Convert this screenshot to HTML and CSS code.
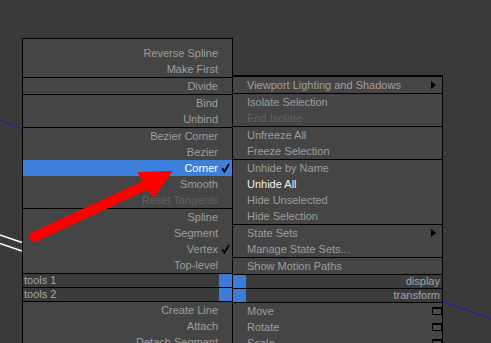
FILE: index.html
```html
<!DOCTYPE html>
<html lang="en">
<head>
    <meta charset="UTF-8">
    <meta name="viewport" content="width=device-width, initial-scale=1.0">
    <title>Quad Menu</title>
    <link rel="stylesheet" href="styles.css">
</head>
<body>
    <div class="viewport">
        <!-- scene lines behind the menu -->
        <svg class="scene" width="491" height="343">
            <line x1="0" y1="120" x2="22" y2="129" stroke="#1c1cb4" stroke-width="1"/>
            <line x1="442" y1="301" x2="491" y2="319" stroke="#1c1cb4" stroke-width="1"/>
            <line x1="0" y1="235" x2="22" y2="242.5" stroke="#ffffff" stroke-width="1.4"/>
            <line x1="0" y1="243.5" x2="22" y2="251" stroke="#ffffff" stroke-width="1.4"/>
        </svg>

        <div class="quad">
            <div class="col col-left">
                <div class="group first">
                    <div class="item"><span class="label">Reverse Spline</span><span class="mark"></span></div>
                    <div class="item"><span class="label">Make First</span><span class="mark"></span></div>
                </div>
                <div class="group">
                    <div class="item"><span class="label">Divide</span><span class="mark"></span></div>
                </div>
                <div class="group">
                    <div class="item"><span class="label">Bind</span><span class="mark"></span></div>
                    <div class="item"><span class="label">Unbind</span><span class="mark"></span></div>
                </div>
                <div class="group">
                    <div class="item"><span class="label">Bezier Corner</span><span class="mark"></span></div>
                    <div class="item"><span class="label">Bezier</span><span class="mark"></span></div>
                    <div class="item active"><span class="label">Corner</span><span class="mark">
                        <svg width="9" height="10" viewBox="0 0 9 10"><path d="M1.2 5.2 L3.4 8.6 L8 1" fill="none" stroke="#000" stroke-width="1.7"/></svg>
                    </span></div>
                    <div class="item"><span class="label">Smooth</span><span class="mark"></span></div>
                    <div class="item disabled"><span class="label">Reset Tangents</span><span class="mark"></span></div>
                </div>
                <div class="group">
                    <div class="item"><span class="label">Spline</span><span class="mark"></span></div>
                    <div class="item"><span class="label">Segment</span><span class="mark"></span></div>
                    <div class="item"><span class="label">Vertex</span><span class="mark">
                        <svg width="9" height="10" viewBox="0 0 9 10"><path d="M1.2 5.2 L3.4 8.6 L8 1" fill="none" stroke="#000" stroke-width="1.7"/></svg>
                    </span></div>
                    <div class="item"><span class="label">Top-level</span><span class="mark"></span></div>
                </div>
                <div class="bar"><span class="bar-text">tools 1</span><span class="swatch"></span></div>
                <div class="bar"><span class="bar-text">tools 2</span><span class="swatch"></span></div>
                <div class="group">
                    <div class="item"><span class="label">Create Line</span><span class="mark"></span></div>
                    <div class="item"><span class="label">Attach</span><span class="mark"></span></div>
                    <div class="item"><span class="label">Detach Segment</span><span class="mark"></span></div>
                </div>
            </div>

            <div class="col col-right">
                <div class="group">
                    <div class="item"><span class="mark"></span><span class="label">Viewport Lighting and Shadows</span><span class="sub"></span></div>
                </div>
                <div class="group">
                    <div class="item"><span class="mark"></span><span class="label">Isolate Selection</span></div>
                    <div class="item disabled"><span class="mark"></span><span class="label">End Isolate</span></div>
                </div>
                <div class="group">
                    <div class="item"><span class="mark"></span><span class="label">Unfreeze All</span></div>
                    <div class="item"><span class="mark"></span><span class="label">Freeze Selection</span></div>
                </div>
                <div class="group">
                    <div class="item"><span class="mark"></span><span class="label">Unhide by Name</span></div>
                    <div class="item hover"><span class="mark"></span><span class="label">Unhide All</span></div>
                    <div class="item"><span class="mark"></span><span class="label">Hide Unselected</span></div>
                    <div class="item"><span class="mark"></span><span class="label">Hide Selection</span></div>
                </div>
                <div class="group">
                    <div class="item"><span class="mark"></span><span class="label">State Sets</span><span class="sub"></span></div>
                    <div class="item"><span class="mark"></span><span class="label">Manage State Sets...</span></div>
                </div>
                <div class="group">
                    <div class="item"><span class="mark"></span><span class="label">Show Motion Paths</span></div>
                </div>
                <div class="bar"><span class="swatch"></span><span class="bar-text">display</span></div>
                <div class="bar"><span class="swatch"></span><span class="bar-text">transform</span></div>
                <div class="group">
                    <div class="item"><span class="mark"></span><span class="label">Move</span><span class="win"></span></div>
                    <div class="item"><span class="mark"></span><span class="label">Rotate</span><span class="win"></span></div>
                    <div class="item"><span class="mark"></span><span class="label">Scale</span><span class="win"></span></div>
                </div>
            </div>
        </div>

        <!-- red annotation arrow -->
        <svg class="arrow" width="491" height="343">
            <line x1="34" y1="237" x2="148" y2="184" stroke="#ff0000" stroke-width="10" stroke-linecap="round"/>
            <polygon points="137,172 173,171 153,198" fill="#ff0000"/>
        </svg>
    </div>
</body>
</html>
```

FILE: styles.css
```css
html, body {
    margin: 0;
    padding: 0;
}
body {
    background: #3a3a3a;
    font-family: "Liberation Sans", Arial, sans-serif;
    font-size: 11px;
    color: #9e9e9e;
}
.viewport {
    position: relative;
    width: 491px;
    height: 343px;
    overflow: hidden;
}
.scene, .arrow {
    position: absolute;
    left: 0;
    top: 0;
}
.arrow {
    pointer-events: none;
}
.quad {
    position: absolute;
    left: 22px;
    top: 38px;
    display: flex;
    align-items: flex-start;
}
.col {
    background: #454545;
    border-top: 1px solid #000;
    border-right: 1px solid #000;
    box-sizing: border-box;
}
.col-left {
    width: 211px;
    border-left: 1px solid #000;
}
.col-right {
    width: 210px;
    margin-top: 37px;
}
.group {
    border-top: 1px solid #000;
}
.group.first {
    border-top: none;
    padding-top: 6px;
}
.item {
    display: flex;
    align-items: center;
    height: 16px;
    line-height: 16px;
    white-space: nowrap;
}
.col-left .item {
    justify-content: flex-end;
}
.col-left .label {
    padding-right: 1px;
}
.col-right .label {
    margin-left: 1px;
}
.mark {
    width: 13px;
    height: 16px;
    display: flex;
    align-items: center;
    justify-content: center;
    flex-shrink: 0;
}
.mark svg {
    display: block;
}
.item.active {
    background: #3d80dc;
    color: #ffffff;
}
.item.disabled {
    color: #626262;
}
.item.hover {
    color: #f2f2f2;
}
.sub {
    margin-left: auto;
    margin-right: 6px;
    width: 0;
    height: 0;
    border-top: 4px solid transparent;
    border-bottom: 4px solid transparent;
    border-left: 5px solid #000;
}
.win {
    margin-left: auto;
    width: 10px;
    height: 8px;
    box-sizing: border-box;
    border: 1px solid #000;
    border-top-width: 2px;
    background: #4c4c4c;
}
.bar {
    display: flex;
    align-items: center;
    height: 13px;
    line-height: 13px;
    border-top: 1px solid #000;
    background: #3b3b3b;
    color: #a6a6a6;
}
.bar-text {
    flex: 1;
}
.col-left .bar-text {
    padding-left: 1px;
}
.col-right .bar-text {
    text-align: right;
    padding-right: 2px;
}
.swatch {
    width: 13px;
    height: 13px;
    background: #3a7cd8;
}
```
